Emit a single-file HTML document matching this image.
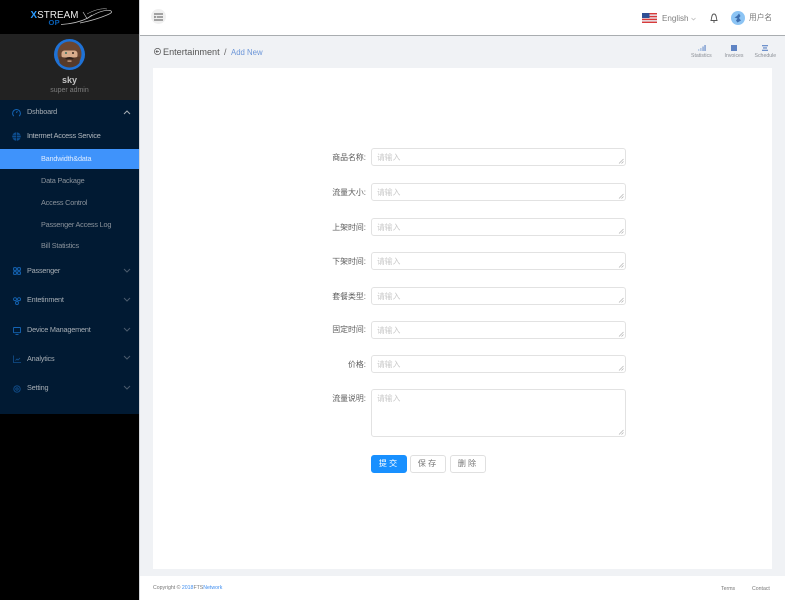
<!DOCTYPE html>
<html>
<head>
<meta charset="utf-8">
<style>
html,body{margin:0;padding:0}
body{width:785px;height:600px;position:relative;overflow:hidden;background:#f0f2f5;font-family:"Liberation Sans","Noto Sans CJK SC",sans-serif;filter:blur(.3px)}
.a{position:absolute;white-space:nowrap}
.nav{color:#a6adb4;font-size:7.300px;line-height:10px;letter-spacing:-.2px}
.sub{color:#8a929b;font-size:7.300px;line-height:10px;letter-spacing:-.2px;left:41px}
.lab{color:#5c5c5c;font-size:7.900px;line-height:12px;right:419px;text-align:right;margin-top:1px}
.inp{left:371px;width:253px;height:16px;border:1px solid #e2e2e2;border-radius:3px;background:#fff}
.ph{position:absolute;left:5px;top:2.500px;font-size:7.800px;line-height:11px;color:#c8c8c8}
.rs{position:absolute;right:1px;bottom:1px}
.btn{top:455px;height:16px;border:1px solid #e0e0e0;border-radius:3px;background:#fff;color:#777;font-size:8.200px;line-height:16px;text-align:center;letter-spacing:2px}
.ic{position:absolute}
.small{font-size:5.200px;line-height:7px;color:#8b8f96}
</style>
</head>
<body>
<!-- sidebar -->
<div class="a" style="left:0;top:0;width:139px;height:600px;background:#000"></div>
<div class="a" style="left:0;top:34px;width:139px;height:66px;background:#222"></div>
<div class="a" style="left:0;top:100px;width:139px;height:314px;background:#011a33"></div>
<div class="a" style="left:139px;top:0;width:1px;height:600px;background:#d4d6da"></div>

<!-- logo -->
<div class="a" style="left:30.500px;top:10px;font-size:9.800px;line-height:11px;color:#ececec;letter-spacing:.1px"><b style="color:#2a9bff">X</b>STREAM</div>
<div class="a" style="left:48.500px;top:19px;font-size:7.500px;line-height:7px;font-weight:bold;color:#0a5fb4;letter-spacing:.3px">OP</div>
<svg class="a" style="left:60px;top:4px" width="56" height="24" viewBox="0 0 56 24" fill="none" stroke="#c4c4c4" stroke-width=".7">
<path d="M1 20.500 C10 20 20 18 28 14 C36 9 44 5.500 50 6.500 C53 7.500 52 9 47 11 C40 14 30 17 20 19"/>
<path d="M23 8 L27 14.500 L32 11"/>
<path d="M27 10 C34 6 42 4 47 5" stroke-width=".5"/>
</svg>

<!-- avatar -->
<svg class="a" style="left:54px;top:39px" width="31" height="31" viewBox="0 0 31 31">
<circle cx="15.500" cy="15.500" r="15.500" fill="#1f72d6"/>
<clipPath id="c"><circle cx="15.500" cy="15.500" r="13"/></clipPath>
<g clip-path="url(#c)">
<rect width="31" height="31" fill="#1f72d6"/>
<ellipse cx="15.500" cy="15" rx="12" ry="13" fill="#6a4632"/>
<rect x="7.500" y="11.500" width="16" height="8" rx="3" fill="#d9ac8c"/>
<path d="M8 12 Q15 7 23 12 L23 9 Q15 5 8 9Z" fill="#6a4632"/>
<circle cx="12" cy="14" r="1" fill="#3d6f63"/>
<circle cx="19" cy="14" r="1" fill="#3a2a22"/>
<path d="M5 17.500 C9 19 22 19 26 17.500 L25 31 H6Z" fill="#573a2a"/>
<path d="M11 19 Q15.500 17 20 19 L18.500 20.500 Q15.500 19.500 12.500 20.500Z" fill="#30201a"/>
<rect x="13.500" y="21.500" width="4" height="1.200" fill="#d9ac8c"/>
</g>
</svg>
<div class="a" style="left:0;width:139px;top:75px;text-align:center;font-size:9px;line-height:11px;font-weight:bold;color:#c4c4c4">sky</div>
<div class="a" style="left:0;width:139px;top:86px;text-align:center;font-size:7px;line-height:10px;color:#7d7d7d">super admin</div>

<!-- menu -->
<svg class="ic" style="left:12px;top:108px" width="9" height="9" viewBox="0 0 9 9" fill="none" stroke="#1464b4" stroke-width="1"><path d="M1.800 8.200 A3.900 3.900 0 1 1 7.200 8.200"/><path d="M4.500 5 L5.300 3"/></svg>
<div class="a nav" style="left:27px;top:107px">Dshboard</div>
<svg class="a" style="left:123px;top:109px" width="8" height="6" viewBox="0 0 8 6" fill="none" stroke="#a6adb4" stroke-width="1"><path d="M1 5 L4 2 L7 5"/></svg>

<svg class="ic" style="left:12px;top:132px" width="9" height="9" viewBox="0 0 9 9"><circle cx="4.500" cy="4.500" r="4.300" fill="#0e4f92"/><path d="M0 3.200 H9 M0 5.800 H9 M4.500 0 V9" stroke="#011a33" stroke-width=".7"/></svg>
<div class="a nav" style="left:27px;top:131px;color:#b3b9bf">Intermet Access Service</div>

<div class="a" style="left:0;top:149px;width:139px;height:20px;background:#3f93fb"></div>
<div class="a sub" style="top:154px;color:#dcebff">Bandwidth&amp;data</div>
<div class="a sub" style="top:176px">Data Package</div>
<div class="a sub" style="top:197.500px">Access Control</div>
<div class="a sub" style="top:219.500px">Passenger Access Log</div>
<div class="a sub" style="top:241px">Bill Statistics</div>

<svg class="ic" style="left:12.500px;top:266.500px" width="8" height="8" viewBox="0 0 8 8" fill="none" stroke="#1464b4" stroke-width="1"><rect x=".6" y=".6" width="2.800" height="2.800" rx=".8"/><rect x="4.600" y=".6" width="2.800" height="2.800" rx=".8"/><rect x=".6" y="4.600" width="2.800" height="2.800" rx=".8"/><rect x="4.600" y="4.600" width="2.800" height="2.800" rx=".8"/></svg>
<div class="a nav" style="left:27px;top:266px">Passenger</div>
<svg class="a" style="left:123px;top:268px" width="8" height="6" viewBox="0 0 8 6" fill="none" stroke="#4a5a6c" stroke-width="1"><path d="M1 1 L4 4 L7 1"/></svg>

<svg class="ic" style="left:12.500px;top:296.500px" width="8" height="8" viewBox="0 0 8 8" fill="none" stroke="#1464b4" stroke-width=".9"><circle cx="2" cy="2.200" r="1.500"/><circle cx="6" cy="2.200" r="1.500"/><circle cx="4" cy="6" r="1.500"/></svg>
<div class="a nav" style="left:27px;top:295px">Entetinment</div>
<svg class="a" style="left:123px;top:297px" width="8" height="6" viewBox="0 0 8 6" fill="none" stroke="#4a5a6c" stroke-width="1"><path d="M1 1 L4 4 L7 1"/></svg>

<svg class="ic" style="left:12.500px;top:326.500px" width="8" height="8" viewBox="0 0 8 8" fill="none" stroke="#1464b4" stroke-width=".9"><rect x=".5" y=".5" width="7" height="5.200" rx=".5"/><path d="M2.500 7.500 H5.500"/></svg>
<div class="a nav" style="left:27px;top:325px">Device Management</div>
<svg class="a" style="left:123px;top:327px" width="8" height="6" viewBox="0 0 8 6" fill="none" stroke="#4a5a6c" stroke-width="1"><path d="M1 1 L4 4 L7 1"/></svg>

<svg class="ic" style="left:12.500px;top:355px" width="8" height="8" viewBox="0 0 8 8" fill="none" stroke="#12508f" stroke-width=".8"><path d="M.5 .5 V7.500 H8"/><path d="M2.500 5.500 L4 4 L5 5 L7 3"/></svg>
<div class="a nav" style="left:27px;top:354px">Analytics</div>
<svg class="a" style="left:123px;top:355px" width="8" height="6" viewBox="0 0 8 6" fill="none" stroke="#4a5a6c" stroke-width="1"><path d="M1 1 L4 4 L7 1"/></svg>

<svg class="ic" style="left:12.500px;top:385px" width="8" height="8" viewBox="0 0 8 8" fill="none" stroke="#12508f" stroke-width=".9"><circle cx="4" cy="4" r="3.200"/><circle cx="4" cy="4" r="1.200"/></svg>
<div class="a nav" style="left:27px;top:383px">Setting</div>
<svg class="a" style="left:123px;top:385px" width="8" height="6" viewBox="0 0 8 6" fill="none" stroke="#4a5a6c" stroke-width="1"><path d="M1 1 L4 4 L7 1"/></svg>

<!-- header -->
<div class="a" style="left:140px;top:0;width:645px;height:35px;background:#fff"></div>
<div class="a" style="left:140px;top:35px;width:645px;height:1px;background:#a9adb0"></div>
<div class="a" style="left:151px;top:9px;width:15px;height:15px;border-radius:50%;background:#f0f0f0"></div>
<svg class="a" style="left:154px;top:13px" width="9" height="8" viewBox="0 0 9 8" fill="none" stroke="#555" stroke-width="1"><path d="M0 1 H9 M3 4 H9 M0 7 H9"/><path d="M0 3 L2 4 L0 5" stroke-width=".6"/></svg>

<svg class="a" style="left:642px;top:13px" width="15" height="10" viewBox="0 0 15 10"><rect width="15" height="10" fill="#e8e8ee"/><rect y="0" width="15" height="1.400" fill="#d83a3a"/><rect y="2.900" width="15" height="1.400" fill="#d83a3a"/><rect y="5.700" width="15" height="1.400" fill="#d83a3a"/><rect y="8.600" width="15" height="1.400" fill="#d83a3a"/><rect width="7.500" height="5" fill="#2f4f94"/></svg>
<div class="a" style="left:662px;top:13px;font-size:8.100px;line-height:11px;color:#808080">English</div>
<svg class="a" style="left:691px;top:17px" width="5" height="4" viewBox="0 0 5 4" fill="none" stroke="#b5b5b5" stroke-width=".7"><path d="M.5 1 L2.500 3 L4.500 1"/></svg>
<svg class="a" style="left:710px;top:13px" width="8" height="10" viewBox="0 0 8 10" fill="none" stroke="#555" stroke-width=".9"><path d="M1 7.500 C1.800 6 1.200 1 4 1 C6.800 1 6.200 6 7 7.500 Z"/><path d="M3 9 H5"/></svg>
<svg class="a" style="left:731px;top:11px" width="14" height="14" viewBox="0 0 14 14"><circle cx="7" cy="7" r="7" fill="#8cc4f4"/><path d="M8 2.500 L9.500 5 L8 7 L10 9.500 L6.500 11.500 L5 9.500 L6.500 7.500 L3.500 6.500 L6 5Z" fill="#3e6fb0"/></svg>
<div class="a" style="left:749px;top:12px;font-size:7.700px;line-height:12px;color:#777">用户名</div>

<!-- breadcrumb -->
<svg class="a" style="left:154px;top:48px" width="7" height="7" viewBox="0 0 7 7" fill="none" stroke="#555" stroke-width=".7"><circle cx="3.500" cy="3.500" r="3.100"/><path d="M5 3.500 H2 M3.300 2.200 L2 3.500 L3.300 4.800"/></svg>
<div class="a" style="left:163px;top:46px;font-size:9.100px;line-height:12px;color:#555">Entertainment</div>
<div class="a" style="left:224px;top:46px;font-size:9px;line-height:12px;color:#666">/</div>
<div class="a" style="left:231px;top:46.500px;font-size:7.800px;line-height:12px;color:#6c96d8">Add New</div>

<!-- top right tabs -->
<svg class="a" style="left:698px;top:45px" width="8" height="6" viewBox="0 0 8 6"><rect x="0" y="4" width="1.300" height="2" fill="#bccde6"/><rect x="2.200" y="3" width="1.300" height="3" fill="#a2bbe0"/><rect x="4.400" y="1.500" width="1.300" height="4.500" fill="#7f9fd3"/><rect x="6.400" y="0" width="1.300" height="6" fill="#6f92cc"/></svg>
<div class="a small" style="left:691px;top:53px">Statistics</div>
<div class="a" style="left:731px;top:45px;width:6px;height:6px;background:#5f84c4"></div>
<div class="a small" style="left:724.500px;top:52.500px">Invoices</div>
<svg class="a" style="left:762px;top:45px" width="6" height="6" viewBox="0 0 6 6" fill="#6f92cc"><rect width="6" height="1.300"/><rect x="1" y="2.300" width="4" height="1.300"/><rect y="4.700" width="6" height="1.300"/></svg>
<div class="a small" style="left:754.500px;top:52.500px">Schedule</div>

<!-- card -->
<div class="a" style="left:153px;top:68px;width:619px;height:501px;background:#fff"></div>

<!-- form -->
<div class="a lab" style="top:151px">商品名称:</div>
<div class="a inp" style="top:148px"><span class="ph">请输入</span><svg class="rs" width="6" height="6" fill="none" stroke="#aaa" stroke-width=".6"><path d="M1 5.500 L5.500 1 M3.500 5.500 L5.500 3.500"/></svg></div>
<div class="a lab" style="top:186px">流量大小:</div>
<div class="a inp" style="top:183px"><span class="ph">请输入</span><svg class="rs" width="6" height="6" fill="none" stroke="#aaa" stroke-width=".6"><path d="M1 5.500 L5.500 1 M3.500 5.500 L5.500 3.500"/></svg></div>
<div class="a lab" style="top:221px">上架时间:</div>
<div class="a inp" style="top:218px"><span class="ph">请输入</span><svg class="rs" width="6" height="6" fill="none" stroke="#aaa" stroke-width=".6"><path d="M1 5.500 L5.500 1 M3.500 5.500 L5.500 3.500"/></svg></div>
<div class="a lab" style="top:255px">下架时间:</div>
<div class="a inp" style="top:252px"><span class="ph">请输入</span><svg class="rs" width="6" height="6" fill="none" stroke="#aaa" stroke-width=".6"><path d="M1 5.500 L5.500 1 M3.500 5.500 L5.500 3.500"/></svg></div>
<div class="a lab" style="top:290px">套餐类型:</div>
<div class="a inp" style="top:287px"><span class="ph">请输入</span><svg class="rs" width="6" height="6" fill="none" stroke="#aaa" stroke-width=".6"><path d="M1 5.500 L5.500 1 M3.500 5.500 L5.500 3.500"/></svg></div>
<div class="a lab" style="top:323px">固定时间:</div>
<div class="a inp" style="top:321px"><span class="ph">请输入</span><svg class="rs" width="6" height="6" fill="none" stroke="#aaa" stroke-width=".6"><path d="M1 5.500 L5.500 1 M3.500 5.500 L5.500 3.500"/></svg></div>
<div class="a lab" style="top:358px">价格:</div>
<div class="a inp" style="top:355px"><span class="ph">请输入</span><svg class="rs" width="6" height="6" fill="none" stroke="#aaa" stroke-width=".6"><path d="M1 5.500 L5.500 1 M3.500 5.500 L5.500 3.500"/></svg></div>
<div class="a lab" style="top:392px">流量说明:</div>
<div class="a inp" style="top:389px;height:46px"><span class="ph">请输入</span><svg class="rs" width="6" height="6" fill="none" stroke="#aaa" stroke-width=".6"><path d="M1 5.500 L5.500 1 M3.500 5.500 L5.500 3.500"/></svg></div>

<div class="a btn" style="left:371px;width:34px;background:#1890ff;border-color:#1890ff;color:#fff">提交</div>
<div class="a btn" style="left:410px;width:34px">保存</div>
<div class="a btn" style="left:450px;width:34px">删除</div>

<!-- footer -->
<div class="a" style="left:140px;top:576px;width:645px;height:24px;background:#fff"></div>
<div class="a" style="left:153px;top:584px;font-size:5.200px;line-height:8px;color:#777">Copyright © <span style="color:#3f8ef0">2018</span>FTS<span style="color:#3f8ef0">Network</span></div>
<div class="a" style="left:721px;top:584.500px;font-size:5.200px;line-height:8px;color:#777">Terms</div>
<div class="a" style="left:752px;top:584.500px;font-size:5.200px;line-height:8px;color:#777">Contact</div>
</body>
</html>
